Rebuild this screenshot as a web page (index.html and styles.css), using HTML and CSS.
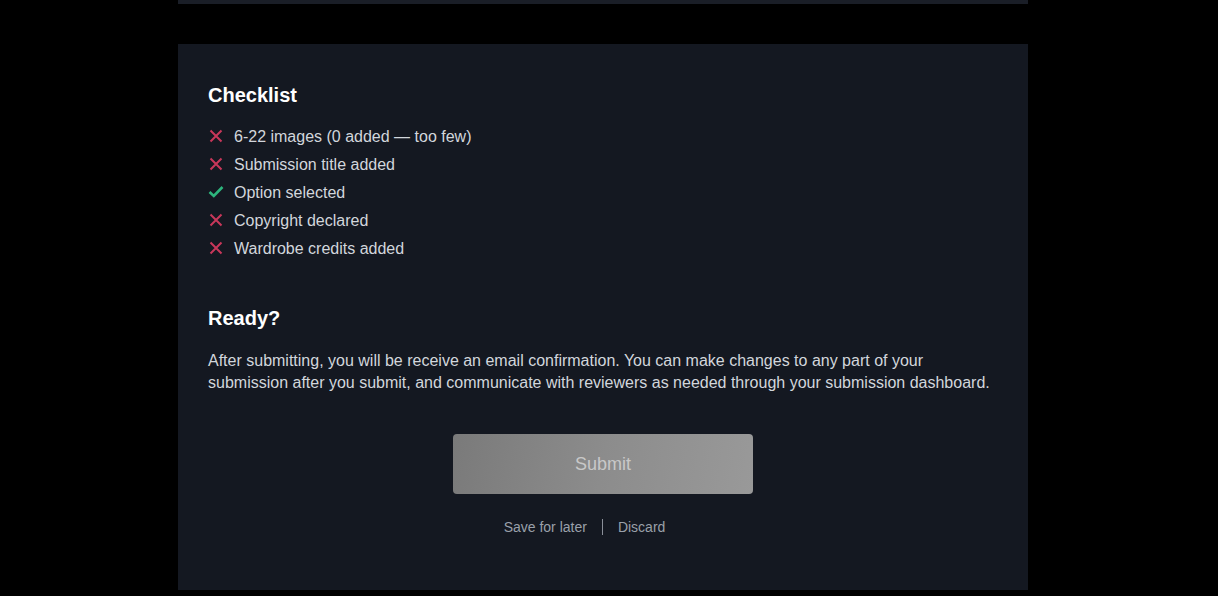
FILE: index.html
```html
<!DOCTYPE html>
<html lang="en">
<head>
<meta charset="utf-8">
<title>Submission checklist</title>
<link rel="stylesheet" href="styles.css">
</head>
<body>
<div class="page">
  <div class="panel panel-top"></div>
  <section class="panel panel-main">
    <h2 class="heading">Checklist</h2>
    <ul class="checklist">
      <li class="item"><svg class="icon bad" viewBox="0 0 14 14"><path d="M1.5 1.5 L12.5 12.5 M12.5 1.5 L1.5 12.5"/></svg><span>6-22 images (0 added — too few)</span></li>
      <li class="item"><svg class="icon bad" viewBox="0 0 14 14"><path d="M1.5 1.5 L12.5 12.5 M12.5 1.5 L1.5 12.5"/></svg><span>Submission title added</span></li>
      <li class="item"><svg class="icon good" viewBox="0 0 16 14"><path d="M1.5 7 L5.8 11 L14.5 2"/></svg><span>Option selected</span></li>
      <li class="item"><svg class="icon bad" viewBox="0 0 14 14"><path d="M1.5 1.5 L12.5 12.5 M12.5 1.5 L1.5 12.5"/></svg><span>Copyright declared</span></li>
      <li class="item"><svg class="icon bad" viewBox="0 0 14 14"><path d="M1.5 1.5 L12.5 12.5 M12.5 1.5 L1.5 12.5"/></svg><span>Wardrobe credits added</span></li>
    </ul>
    <h2 class="heading heading-ready">Ready?</h2>
    <p class="text">After submitting, you will be receive an email confirmation. You can make changes to any part of your submission after you submit, and communicate with reviewers as needed through your submission dashboard.</p>
    <div class="actions">
      <button class="submit" type="button" disabled>Submit</button>
      <div class="links">
        <a class="link" href="#">Save for later</a>
        <span class="sep"></span>
        <a class="link" href="#">Discard</a>
      </div>
    </div>
  </section>
</div>
</body>
</html>
```

FILE: styles.css
```css
* { box-sizing: border-box; }
html, body {
  margin: 0;
  padding: 0;
  background: #000;
}
body {
  font-family: "Liberation Sans", Arial, sans-serif;
  color: #d2d6dc;
}
.page {
  width: 850px;
  margin-left: 178px;
  display: flex;
  flex-direction: column;
  gap: 40px;
}
.panel {
  background: #141821;
}
.panel-top {
  height: 4px;
  background: #1a1e27;
}
.panel-main {
  height: 546px;
  padding: 39px 29px 0 30px;
}
.heading {
  margin: 0;
  font-size: 20px;
  line-height: 24px;
  font-weight: bold;
  color: #fff;
}
.checklist {
  list-style: none;
  margin: 16px 0 0;
  padding: 0;
}
.item {
  display: flex;
  align-items: center;
  height: 28px;
  font-size: 16px;
  color: #d2d6dc;
}
.icon {
  width: 14px;
  height: 14px;
  margin-right: 11px;
  margin-left: 1px;
  margin-bottom: 2px;
  fill: none;
  stroke-width: 2;
  stroke-linecap: butt;
}
.icon.bad { stroke: #c8375a; }
.icon.good { stroke: #2db57d; stroke-width: 2.6; width: 16px; margin-left: 0; margin-right: 10px; }
.heading-ready {
  margin-top: 43px;
}
.text {
  margin: 20px 0 0;
  font-size: 16px;
  line-height: 22px;
  color: #d2d6dc;
}
.actions {
  display: flex;
  flex-direction: column;
  align-items: center;
  margin-top: 40px;
  margin-left: -30px;
  margin-right: -29px;
}
.submit {
  width: 300px;
  height: 60px;
  border: none;
  border-radius: 4px;
  background: linear-gradient(100deg, #7a7a7a 0%, #8c8c8c 50%, #999999 100%);
  color: #c8c8c8;
  font-family: "Liberation Sans", Arial, sans-serif;
  font-size: 18px;
  padding: 0;
}
.links {
  display: flex;
  align-items: center;
  gap: 15px;
  margin-top: 23px;
  margin-right: 37px;
  height: 20px;
}
.link {
  font-size: 14px;
  color: #9aa0aa;
  text-decoration: none;
}
.sep {
  width: 1px;
  height: 16px;
  background: #8a8f99;
}
```
